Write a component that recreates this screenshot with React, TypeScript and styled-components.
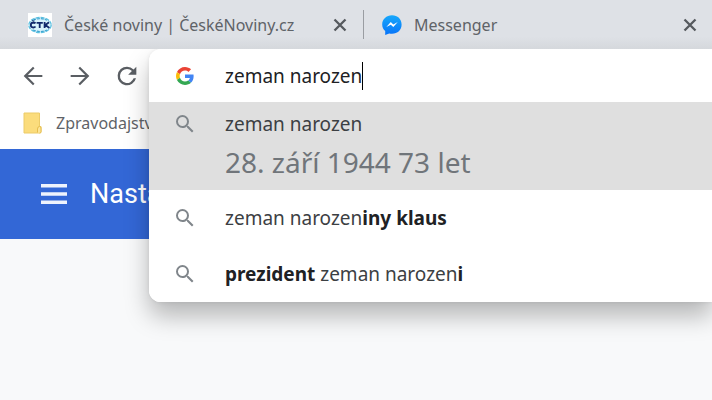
import React, { useState } from "react";
import styled, { createGlobalStyle } from "styled-components";

const GlobalStyle = createGlobalStyle`
  * { box-sizing: border-box; }
  html, body { margin: 0; min-height: 100%; background: #f8f9fa; }
  body {
    font-family: "Segoe UI", "Noto Sans", "Open Sans", sans-serif;
    font-size: 16px;
    line-height: 24px;
    color: #5f6368;
    overflow: hidden;
  }
  button { font: inherit; color: inherit; background: none; border: 0; padding: 0; margin: 0; text-align: left; }
  svg { display: block; flex: none; }
`;

const Browser = styled.div`
  position: relative;
  overflow: hidden;
  min-height: 100vh;
`;

const TabStrip = styled.div`
  display: flex;
  align-items: center;
  height: 49px;
  padding: 0 12px 0 28px;
  background: linear-gradient(#dee1e6 75%, #d5d8dc);
`;

const Tab = styled.div<{ $width?: number }>`
  display: flex;
  align-items: center;
  flex: ${(p) => (p.$width ? `0 0 ${p.$width}px` : "1")};
`;

const TabTitle = styled.button`
  flex: 1;
  margin-left: 12px;
  white-space: nowrap;
`;

const IconButton = styled.button`
  display: flex;
  flex: none;
`;

const Divider = styled.span`
  width: 1px;
  height: 29px;
  margin: 0 18px 0 13px;
  background: #9a9da2;
`;

const Toolbar = styled.nav`
  display: flex;
  align-items: center;
  gap: 19px;
  height: 53px;
  padding-left: 19px;
  background: #fff;
`;

const Bookmarks = styled.div`
  display: flex;
  align-items: center;
  height: 47px;
  padding: 0 0 5px 23px;
  background: #fff;
`;

const Bookmark = styled.a`
  display: flex;
  align-items: center;
  gap: 14px;
  color: inherit;
  text-decoration: none;
`;

const PageHeader = styled.header`
  display: flex;
  align-items: center;
  gap: 23px;
  height: 90px;
  padding: 0 0 0 41px;
  background: #3367d6;
  color: #fff;
`;

const PageTitle = styled.h1`
  margin: 0;
  font: 400 27px/32px Roboto, sans-serif;
`;

const Popup = styled.div`
  position: absolute;
  top: 49px;
  left: 149px;
  right: 0;
  overflow: hidden;
  border-radius: 12px 0 0 12px;
  background: #fff;
`;

const PopupShadow = styled(Popup)`
  height: 253px;
  box-shadow: 0 14px 24px rgba(0, 0, 0, 0.27), 0 0 4px rgba(0, 0, 0, 0.08);
  clip-path: inset(0 0 -50px -30px);
`;

const OmniboxRow = styled.label`
  display: flex;
  align-items: center;
  height: 53px;
  padding-left: 24px;
`;

const OmniboxInput = styled.input`
  field-sizing: content;
  margin: 0 0 0 28px;
  padding: 0;
  border: 0;
  outline: 0;
  background: none;
  font: inherit;
  font-size: 19px;
  color: #202124;
`;

const Caret = styled.span`
  width: 1px;
  height: 28px;
  background: #000;
`;

const Suggestions = styled.ul`
  list-style: none;
  margin: 0;
  padding: 0;
`;

const Suggestion = styled.button<{ $selected?: boolean }>`
  display: flex;
  align-items: flex-start;
  gap: 28px;
  width: 100%;
  padding: ${(p) => (p.$selected ? "10px 0 8px 24px" : "16px 0 16px 24px")};
  background: ${(p) => (p.$selected ? "#dfdfdf" : "#fff")};
  color: #3c4043;
  font-size: 19px;
  white-space: nowrap;

  b { color: #202124; font-weight: 700; }
`;

const SuggestionText = styled.span`
  display: flex;
  flex-direction: column;
`;

const Answer = styled.span`
  margin-top: 6px;
  font-size: 28px;
  line-height: 40px;
  color: #70757a;
`;

const SearchIcon = () => (
  <svg width="24" height="24" viewBox="0 0 24 24" fill="#80868b" aria-hidden="true">
    <path d="M15.5 14h-.79l-.28-.27A6.47 6.47 0 0 0 16 9.5 6.5 6.5 0 1 0 9.5 16c1.61 0 3.09-.59 4.23-1.57l.27.28v.79l5 4.99L20.49 19l-4.99-5zm-6 0a4.5 4.5 0 1 1 0-9 4.5 4.5 0 0 1 0 9z" />
  </svg>
);

const CloseIcon = () => (
  <svg width="20" height="20" viewBox="0 0 20 20" aria-hidden="true">
    <path d="M4.5 4.5l11 11M15.5 4.5l-11 11" stroke="#55595e" strokeWidth="2.3" />
  </svg>
);

const NavIcon = ({ d }: { d: string }) => (
  <svg width="28" height="28" viewBox="0 0 24 24" fill="#5a5e63" aria-hidden="true">
    <path d={d} />
  </svg>
);

const GoogleIcon = () => (
  <svg width="24" height="24" viewBox="-8 -8 64 64" aria-hidden="true">
    <path fill="#EA4335" d="M24 9.5c3.54 0 6.71 1.22 9.21 3.6l6.85-6.85C35.9 2.38 30.47 0 24 0 14.62 0 6.51 5.38 2.56 13.22l7.98 6.19C12.43 13.72 17.74 9.5 24 9.5z" />
    <path fill="#4285F4" d="M46.98 24.55c0-1.57-.15-3.09-.38-4.55H24v9.02h12.94c-.58 2.96-2.26 5.48-4.78 7.18l7.73 6c4.51-4.18 7.09-10.36 7.09-17.65z" />
    <path fill="#FBBC05" d="M10.53 28.59A14.5 14.5 0 0 1 9.77 24c0-1.6.27-3.14.76-4.59l-7.98-6.19A23.94 23.94 0 0 0 0 24c0 3.88.92 7.54 2.56 10.78z" />
    <path fill="#34A853" d="M24 48c6.48 0 11.93-2.13 15.89-5.81l-7.73-6c-2.15 1.45-4.92 2.3-8.16 2.3-6.26 0-11.57-4.22-13.47-9.91l-7.98 6.19C6.51 42.62 14.62 48 24 48z" />
  </svg>
);

const CtkIcon = () => (
  <svg width="24" height="24" viewBox="0 0 24 24" aria-hidden="true">
    <rect width="24" height="24" fill="#fff" />
    <ellipse cx="12" cy="12" rx="11.2" ry="7.6" fill="#d9f3fb" stroke="#5bbfe0" strokeWidth="1.3" strokeDasharray="4 1" />
    <path d="M5 7.2q7-3 14 0M5 17q7 3 14 0" fill="none" stroke="#3fa6d2" strokeWidth="1.2" strokeDasharray="3 1" />
    <g fill="none" stroke="#12296b" strokeWidth="1.8">
      <path d="M7.5 10.4Q6.7 9.5 5.3 9.5 2.8 9.7 2.8 12t2.5 2.5q1.4 0 2.2-1" />
      <path d="M4.2 7.2l1.1.9 1.1-.9" strokeWidth="1" />
      <path d="M8.6 9.8h6.2M11.7 9.2v5.8M16.6 9v6M21 9.200L17.400 12l4 3" />
    </g>
  </svg>
);

const MessengerIcon = () => (
  <svg width="20" height="20" viewBox="0 0 20 20" aria-hidden="true">
    <defs>
      <linearGradient id="bubble" x1="0" y1="0" x2="0" y2="1">
        <stop stopColor="#17a8fb" />
        <stop offset="1" stopColor="#0874f9" />
      </linearGradient>
    </defs>
    <path fill="url(#bubble)" d="M10 .3C4.4.3.2 4.3.2 9.500c0 2.800 1.200 5 3 6.500v4l4-1.600c.9.300 1.800.4 2.800.4 5.600 0 9.600-4 9.600-9.300S15.600.3 10 .3z" />
    <path fill="#fff" d="M4.300 12 8.800 7.100l2.500 2.300 4.500-2.300-4.500 4.900-2.500-2.300z" />
  </svg>
);

const FolderIcon = () => (
  <svg width="19" height="22" viewBox="0 0 19 22" aria-hidden="true">
    <path d="M1 1h15.500v13.500H18V20q0 1-1 1H1z" fill="#fbdc7c" stroke="#eccb68" />
    <path d="M14.500 20.500V17q0-2.500 2-2.500T18 17v2.500q0 1.500-1.500 1.500" fill="#fde597" stroke="#e5bd4d" />
  </svg>
);

const MenuIcon = () => (
  <svg width="26" height="20" viewBox="0 0 26 20" fill="#eef3fd" aria-hidden="true">
    <path d="M0 0h26v3.500H0zM0 8.300h26v3.500H0zM0 16.500h26v3.500H0z" />
  </svg>
);

export default function App() {
  const [query, setQuery] = useState("zeman narozen");
  return (
    <>
      <GlobalStyle />
      <Browser>
        <TabStrip>
          <Tab $width={322}>
            <CtkIcon />
            <TabTitle>České noviny | ČeskéNoviny.cz</TabTitle>
            <IconButton aria-label="Zavřít kartu České noviny"><CloseIcon /></IconButton>
          </Tab>
          <Divider />
          <Tab>
            <MessengerIcon />
            <TabTitle>Messenger</TabTitle>
            <IconButton aria-label="Zavřít kartu Messenger"><CloseIcon /></IconButton>
          </Tab>
        </TabStrip>
        <Toolbar>
          <IconButton aria-label="Zpět"><NavIcon d="M20 11.100H7.600l5.700-5.700L12 4l-8 8 8 8 1.300-1.400-5.700-5.700H20z" /></IconButton>
          <IconButton aria-label="Vpřed"><NavIcon d="M4 11.100h12.400l-5.700-5.700L12 4l8 8-8 8-1.300-1.400 5.700-5.700H4z" /></IconButton>
          <IconButton aria-label="Obnovit"><NavIcon d="M17.650 6.350A7.960 7.960 0 0 0 12 4a8 8 0 1 0 7.730 10h-2.080A6 6 0 1 1 12 6c1.660 0 3.140.69 4.220 1.780L13 11h7V4z" /></IconButton>
        </Toolbar>
        <Bookmarks>
          <Bookmark href="#zpravodajstvi"><FolderIcon />Zpravodajství</Bookmark>
        </Bookmarks>
        <PageHeader>
          <IconButton aria-label="Hlavní nabídka"><MenuIcon /></IconButton>
          <PageTitle>Nastavení</PageTitle>
        </PageHeader>
        <PopupShadow />
        <Popup>
          <OmniboxRow>
            <GoogleIcon />
            <OmniboxInput aria-label="Adresní řádek" value={query} onChange={(e) => setQuery(e.target.value)} />
            <Caret />
          </OmniboxRow>
          <Suggestions>
            <li>
              <Suggestion $selected>
                <SearchIcon />
                <SuggestionText>
                  <span>zeman narozen</span>
                  <Answer>28. září 1944 73 let</Answer>
                </SuggestionText>
              </Suggestion>
            </li>
            <li>
              <Suggestion><SearchIcon /><span>zeman narozen<b>iny klaus</b></span></Suggestion>
            </li>
            <li>
              <Suggestion><SearchIcon /><span><b>prezident</b> zeman narozen<b>i</b></span></Suggestion>
            </li>
          </Suggestions>
        </Popup>
      </Browser>
    </>
  );
}
